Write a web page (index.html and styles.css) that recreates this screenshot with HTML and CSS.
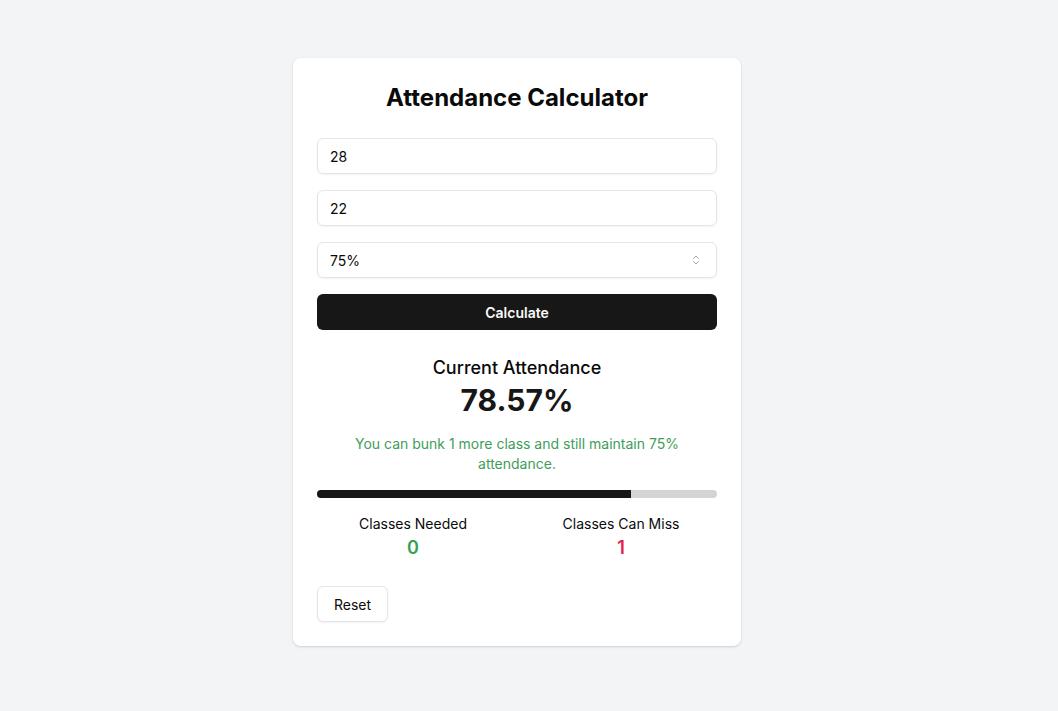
FILE: index.html
```html
<!DOCTYPE html>
<html lang="en">
<head>
<meta charset="utf-8">
<title>Attendance Calculator</title>
<link rel="stylesheet" href="styles.css">
</head>
<body>
<main class="page">
  <section class="card">
    <h1 class="title">Attendance Calculator</h1>
    <div class="field">28</div>
    <div class="field">22</div>
    <div class="field select">
      <span>75%</span>
      <svg class="chev" width="12" height="12" viewBox="0 0 24 24" fill="none" stroke="#9ca3af" stroke-width="2" stroke-linecap="round" stroke-linejoin="round"><path d="m7 15 5 5 5-5"/><path d="m7 9 5-5 5 5"/></svg>
    </div>
    <button class="calc">Calculate</button>

    <div class="result">
      <h2 class="result-label">Current Attendance</h2>
      <div class="result-value">78.57%</div>
      <p class="message">You can bunk 1 more class and still maintain 75% attendance.</p>
    </div>

    <div class="progress"><div class="progress-fill" style="width:78.57%"></div></div>

    <div class="stats">
      <div class="stat">
        <div class="stat-label">Classes Needed</div>
        <div class="stat-value good">0</div>
      </div>
      <div class="stat">
        <div class="stat-label">Classes Can Miss</div>
        <div class="stat-value bad">1</div>
      </div>
    </div>

    <div class="actions"><button class="reset">Reset</button></div>
  </section>
</main>
</body>
</html>
```
FILE: styles.css
```css
* { box-sizing: border-box; }
html, body { margin: 0; padding: 0; }
body {
  background: #f3f4f6;
  font-family: Inter, "Noto Sans", sans-serif;
  color: #0a0a0a;
}
.page {
  display: flex;
  justify-content: center;
  padding-top: 58px;
  padding-right: 24px;
  min-height: 711px;
}
.card {
  width: 448px;
  background: #fff;
  border-radius: 8px;
  box-shadow: 0 1px 3px rgba(0,0,0,0.1), 0 1px 2px rgba(0,0,0,0.06);
  padding: 24px;
  display: flex;
  flex-direction: column;
  align-self: flex-start;
}
.title {
  margin: 0 0 24px;
  font-size: 24px;
  line-height: 32px;
  font-weight: 700;
  text-align: center;
}
.field {
  height: 36px;
  border: 1px solid #e5e5e5;
  border-radius: 6px;
  padding: 0 12px;
  display: flex;
  align-items: center;
  font-size: 14px;
  box-shadow: 0 1px 2px rgba(0,0,0,0.05);
  margin-bottom: 16px;
  color: #0a0a0a;
}
.select { justify-content: space-between; }
.chev { margin-right: 2px; }
.calc {
  height: 36px;
  border: none;
  border-radius: 6px;
  background: #171717;
  color: #fafafa;
  font-family: inherit;
  font-size: 14px;
  font-weight: 600;
  padding: 0;
}
.result { margin-top: 24px; text-align: center; }
.result-label {
  margin: 0;
  font-size: 18px;
  line-height: 28px;
  font-weight: 500;
}
.result-value {
  font-size: 30px;
  line-height: 36px;
  font-weight: 700;
  color: #171717;
}
.message {
  margin: 16px 0 0;
  font-size: 14px;
  line-height: 20px;
  color: #3f9d5c;
  padding: 0 24px;
}
.progress {
  margin-top: 16px;
  height: 8px;
  border-radius: 999px;
  background: #d4d4d4;
  overflow: hidden;
}
.progress-fill { height: 100%; background: #171717; }
.stats {
  margin-top: 16px;
  display: grid;
  grid-template-columns: 1fr 1fr;
  gap: 16px;
  text-align: center;
}
.stat-label { font-size: 14px; line-height: 20px; }
.stat-value { font-size: 18px; line-height: 28px; font-weight: 600; }
.good { color: #34a253; }
.bad { color: #e11d48; }
.actions { margin-top: 24px; display: flex; }
.reset {
  height: 36px;
  padding: 0 16px;
  background: #fff;
  border: 1px solid #e5e5e5;
  border-radius: 6px;
  box-shadow: 0 1px 2px rgba(0,0,0,0.05);
  font-family: inherit;
  font-size: 14px;
  font-weight: 400;
  color: #0a0a0a;
}
```
